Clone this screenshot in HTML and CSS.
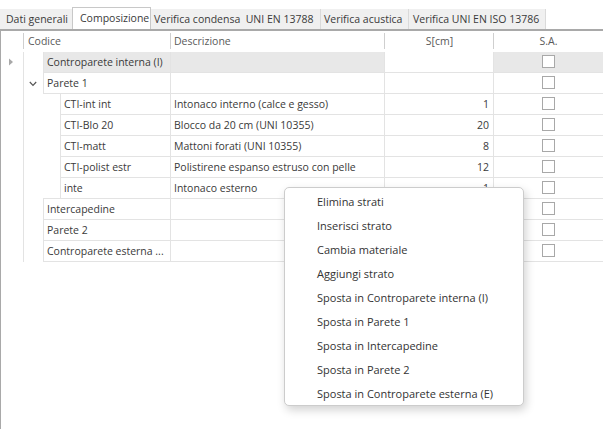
FILE: index.html
```html
<!DOCTYPE html>
<html>
<head>
<meta charset="utf-8">
<link rel="stylesheet" href="styles.css">
</head>
<body>
<div class="tabs">
  <div class="tab t-dati">Dati generali</div>
  <div class="tab tab-sel t-comp">Composizione</div>
  <div class="tab t-cond">Verifica condensa&nbsp; UNI EN 13788</div>
  <div class="tab t-acu">Verifica acustica</div>
  <div class="tab t-iso">Verifica UNI EN ISO 13786</div>
</div>
<div class="grid">
  <div class="row hdr">
    <div class="h h-ind"></div>
    <div class="h h-code">Codice</div>
    <div class="h h-desc">Descrizione</div>
    <div class="h h-num">S[cm]</div>
    <div class="h h-sa">S.A.</div>
  </div>

  <div class="row sel">
    <div class="ind"><svg class="tri" width="5" height="8" viewBox="0 0 5 8"><polygon points="0,0.5 4,4 0,7.5" fill="#a8a8a8"/></svg></div>
    <div class="code"><span class="indent l0"></span><span class="cell ctext">Controparete interna (I)</span></div>
    <div class="cell desc"></div>
    <div class="cell num wh"></div>
    <div class="cell sa"><span class="cb"></span></div>
  </div>

  <div class="row">
    <div class="ind"></div>
    <div class="code"><span class="indent l0"><svg class="chev" width="8" height="6" viewBox="0 0 8 6"><polyline points="0.8,1 4,4.3 7.2,1" fill="none" stroke="#555" stroke-width="1.2"/></svg></span><span class="cell ctext">Parete 1</span></div>
    <div class="cell desc"></div>
    <div class="cell num"></div>
    <div class="cell sa"><span class="cb"></span></div>
  </div>

  <div class="row">
    <div class="ind"></div>
    <div class="code"><span class="indent l1"></span><span class="cell ctext">CTI-int int</span></div>
    <div class="cell desc">Intonaco interno (calce e gesso)</div>
    <div class="cell num">1</div>
    <div class="cell sa"><span class="cb"></span></div>
  </div>

  <div class="row">
    <div class="ind"></div>
    <div class="code"><span class="indent l1"></span><span class="cell ctext">CTI-Blo 20</span></div>
    <div class="cell desc">Blocco da 20 cm (UNI 10355)</div>
    <div class="cell num">20</div>
    <div class="cell sa"><span class="cb"></span></div>
  </div>

  <div class="row">
    <div class="ind"></div>
    <div class="code"><span class="indent l1"></span><span class="cell ctext">CTI-matt</span></div>
    <div class="cell desc">Mattoni forati (UNI 10355)</div>
    <div class="cell num">8</div>
    <div class="cell sa"><span class="cb"></span></div>
  </div>

  <div class="row">
    <div class="ind"></div>
    <div class="code"><span class="indent l1"></span><span class="cell ctext">CTI-polist estr</span></div>
    <div class="cell desc">Polistirene espanso estruso con pelle</div>
    <div class="cell num">12</div>
    <div class="cell sa"><span class="cb"></span></div>
  </div>

  <div class="row">
    <div class="ind"></div>
    <div class="code"><span class="indent l1"></span><span class="cell ctext">inte</span></div>
    <div class="cell desc">Intonaco esterno</div>
    <div class="cell num">1</div>
    <div class="cell sa"><span class="cb"></span></div>
  </div>

  <div class="row">
    <div class="ind"></div>
    <div class="code"><span class="indent l0"></span><span class="cell ctext">Intercapedine</span></div>
    <div class="cell desc"></div>
    <div class="cell num"></div>
    <div class="cell sa"><span class="cb"></span></div>
  </div>

  <div class="row">
    <div class="ind"></div>
    <div class="code"><span class="indent l0"></span><span class="cell ctext">Parete 2</span></div>
    <div class="cell desc"></div>
    <div class="cell num"></div>
    <div class="cell sa"><span class="cb"></span></div>
  </div>

  <div class="row">
    <div class="ind"></div>
    <div class="code"><span class="indent l0"></span><span class="cell ctext">Controparete esterna ...</span></div>
    <div class="cell desc"></div>
    <div class="cell num"></div>
    <div class="cell sa"><span class="cb"></span></div>
  </div>
</div>

<div class="menu">
  <div class="mi">Elimina strati</div>
  <div class="mi">Inserisci strato</div>
  <div class="mi">Cambia materiale</div>
  <div class="mi">Aggiungi strato</div>
  <div class="mi">Sposta in Controparete interna (I)</div>
  <div class="mi">Sposta in Parete 1</div>
  <div class="mi">Sposta in Intercapedine</div>
  <div class="mi">Sposta in Parete 2</div>
  <div class="mi">Sposta in Controparete esterna (E)</div>
</div>
</body>
</html>
```
FILE: styles.css
```css
* { box-sizing: border-box; }
html, body {
  margin: 0;
  padding: 0;
  background: #ffffff;
  width: 603px;
  height: 429px;
  overflow: hidden;
}
body {
  font-family: "Open Sans", "Noto Sans", "DejaVu Sans", sans-serif;
  font-size: 10.5px;
  color: #3a3a3a;
  position: relative;
}

/* Tabs */
.tabs {
  display: flex;
  align-items: flex-end;
  height: 29px;
}
.tab {
  height: 20px;
  line-height: 20px;
  background: #f0f0f0;
  border-right: 1px solid #dadada;
  white-space: nowrap;
  overflow: hidden;
  color: #3a3a3a;
}
.t-dati { width: 72px; padding-left: 6px; border-right: none; }
.tab-sel {
  height: 22px;
  line-height: 21px;
  background: #ffffff;
  border: 1px solid #c8c8c8;
  border-bottom: none;
}
.t-comp { width: 79px; padding-left: 7px; }
.t-cond { width: 170px; padding-left: 3px; }
.t-acu { width: 88px; padding-left: 3px; }
.t-iso { width: 137px; padding-left: 4px; }

/* Grid */
.grid {
  border-top: 2px solid #a9a9a9;
  border-left: 1px solid #a9a9a9;
  height: 400px;
}
.row {
  display: grid;
  grid-template-columns: 23px 147px 214px 109px 1fr;
  height: 21px;
}
.h {
  position: relative;
  line-height: 21px;
  color: #5a5a5a;
  white-space: nowrap;
}
.h::after {
  content: "";
  position: absolute;
  right: 0;
  top: 2px;
  bottom: 3px;
  width: 1px;
  background: #cfcfcf;
}
.h-sa::after { display: none; }
.h-code { padding-left: 4px; }
.h-desc { padding-left: 3px; }
.h-num, .h-sa { text-align: center; }

.ind {
  border-right: 1px solid #e3e3e3;
  position: relative;
}
.tri {
  position: absolute;
  left: 8px;
  top: 6px;
}
.code {
  display: flex;
  height: 21px;
}
.indent {
  flex: none;
  position: relative;
}
.indent.l0 { width: 19px; }
.indent.l1 { width: 36px; }
.chev {
  position: absolute;
  left: 5px;
  top: 8px;
}
.cell {
  height: 21px;
  line-height: 20px;
  border-bottom: 1px solid #e3e3e3;
  border-right: 1px solid #e3e3e3;
  box-shadow: 0 -1px 0 #e3e3e3;
  white-space: nowrap;
  overflow: hidden;
}
.sel .cell { box-shadow: none; background: #e8e8e8; }
.sel .cell.wh { background: #ffffff; }
.ctext {
  flex: 1;
  border-left: 1px solid #e3e3e3;
  padding-left: 3px;
}
.desc { padding-left: 3px; }
.num { text-align: right; padding-right: 4px; }
.sa {
  border-right: none;
  display: flex;
  align-items: center;
  justify-content: center;
}
.cb {
  width: 13px;
  height: 13px;
  border: 1px solid #a8a8a8;
  background: #ffffff;
  margin-top: -1px;
}

/* Context menu */
.menu {
  position: absolute;
  left: 284px;
  top: 187px;
  width: 240px;
  height: 219px;
  padding: 2px 0;
  background: #ffffff;
  border: 1px solid #cccccc;
  border-radius: 5px;
  box-shadow: 2px 4px 10px rgba(0, 0, 0, 0.18);
  font-size: 11px;
  color: #333333;
}
.mi {
  height: 24px;
  line-height: 24px;
  padding-left: 32px;
  white-space: nowrap;
}
```
